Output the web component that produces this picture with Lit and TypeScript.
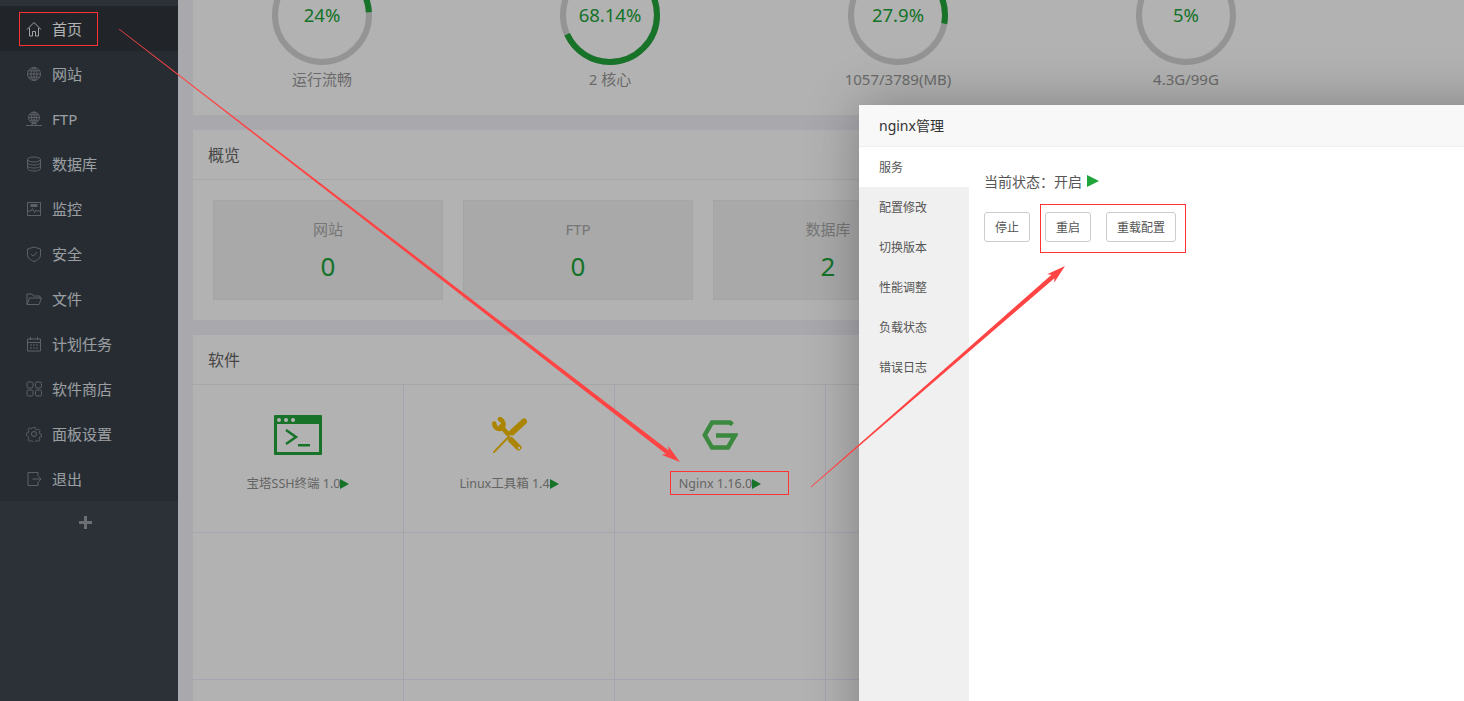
import { LitElement, html, css, svg } from "lit";
import { customElement } from "lit/decorators.js";

const ICONS: Record<string, unknown> = {
  home: svg`<path d="M1 8.500 8 1.500l7 7M3.500 7v8h3v-4.500h3V15h3V7"/>`,
  globe: svg`<circle cx="8" cy="8" r="6.500"/><ellipse cx="8" cy="8" rx="3" ry="6.500"/><path d="M1.500 8h13M2.500 4.800h11M2.500 11.200h11M8 1.500v13"/>`,
  ftp: svg`<circle cx="8" cy="6.500" r="5.500"/><ellipse cx="8" cy="6.500" rx="2.500" ry="5.500"/><path d="M2.500 6.500h11M3.200 3.800h9.600M3.200 9.200h9.600M8 1v11M0 14.500h16M6 12.500h4v2H6z"/>`,
  db: svg`<ellipse cx="8" cy="3.500" rx="6.500" ry="2.500"/><path d="M1.500 3.500v9c0 1.400 2.900 2.500 6.500 2.500s6.500-1.100 6.500-2.500v-9M1.500 6.500C1.500 7.900 4.400 9 8 9s6.500-1.100 6.500-2.500M1.500 9.500c0 1.400 2.900 2.500 6.500 2.500s6.500-1.100 6.500-2.500"/>`,
  monitor: svg`<path d="M1.500 1.500h13v13h-13z"/><path d="M1.500 10H5l1.500-2.500L8.500 11.500 10 9l1 1h3.500"/><path class="fill" d="M4.500 3h7v3h-7z"/>`,
  shield: svg`<path d="M8 1 14.500 3v6c0 3-3 5.200-6.500 6.500C4.500 14.200 1.500 12 1.500 9V3z"/><path d="m5 8 2.200 2.200L11.200 6"/>`,
  folder: svg`<path d="M1 13.500V3h5l1.500 2H14v2M1 13.500h12L15.500 7H3.500z"/>`,
  calendar: svg`<path d="M1.500 3h13v12h-13zM1.500 6.500h13M4.500 1v3M11.500 1v3M4 9h2M7 9h2M10 9h2M4 12h2M7 12h2M10 12h2"/>`,
  grid: svg`<rect x="1" y="1" width="6" height="6" rx="1.500"/><rect x="9.500" y="1" width="6" height="6" rx="1.500"/><rect x="1" y="9" width="6" height="6" rx="1.500"/><rect x="9.500" y="9" width="6" height="6" rx="1.500"/>`,
  gear: svg`<circle cx="8" cy="8" r="2.500"/><path d="M6.800 1h2.400l.4 2 1.500.7 1.800-1 1.600 1.700-1 1.700.6 1.600 1.900.6v2.400l-1.900.5-.6 1.600 1 1.700-1.600 1.500-1.800-1-1.500.7-.4 1.900H6.800l-.4-1.900-1.500-.7-1.800 1-1.600-1.500 1-1.700-.6-1.600L0 9.300V6.900l1.900-.6.6-1.600-1-1.700 1.600-1.700 1.800 1 1.500-.7z" transform="translate(.6 .6) scale(.93)"/>`,
  exit: svg`<path d="M12 5V1.500H2v13h10V11M6.500 8H15M12.500 5.500 15 8l-2.500 2.500"/>`,
};

function arrow(x1: number, y1: number, x2: number, y2: number): string {
  const len = Math.hypot(x2 - x1, y2 - y1);
  const ux = (x2 - x1) / len;
  const uy = (y2 - y1) / len;
  const nx = -uy;
  const ny = ux;
  const at = (along: number, side: number) =>
    `${(x2 - ux * along + nx * side).toFixed(1)},${(y2 - uy * along + ny * side).toFixed(1)}`;
  return [
    at(len, 0.4),
    at(16, 2.2),
    at(19, 5.5),
    at(0, 0),
    at(19, -5.5),
    at(16, -2.2),
    at(len, -0.4),
  ].join(" ");
}

const NAV = [
  ["home", "首页"],
  ["globe", "网站"],
  ["ftp", "FTP"],
  ["db", "数据库"],
  ["monitor", "监控"],
  ["shield", "安全"],
  ["folder", "文件"],
  ["calendar", "计划任务"],
  ["grid", "软件商店"],
  ["gear", "面板设置"],
  ["exit", "退出"],
];

const GAUGES = [
  [24, "24%", "运行流畅"],
  [68.14, "68.14%", "2 核心"],
  [27.9, "27.9%", "1057/3789(MB)"],
  [5, "5%", "4.3G/99G"],
] as const;

const OVERVIEW = [
  ["网站", "0"],
  ["FTP", "0"],
  ["数据库", "2"],
];

const TABS = ["服务", "配置修改", "切换版本", "性能调整", "负载状态", "错误日志"];

const SOFT_ICONS = {
  terminal: svg`<svg class="soft-icon" viewBox="0 0 48 40" width="48" height="40">
    <path fill="#20a53a" fill-rule="evenodd" d="M1 0h46a1 1 0 0 1 1 1v38a1 1 0 0 1-1 1H1a1 1 0 0 1-1-1V1a1 1 0 0 1 1-1zm2 9v28h42V9z"/>
    <circle cx="5" cy="5" r="2" fill="#fff"/><circle cx="12" cy="5" r="2" fill="#fff"/><circle cx="19" cy="5" r="2" fill="#fff"/>
    <path fill="none" stroke="#20a53a" stroke-width="2.500" d="m12 15 10 7-10 7"/>
    <path fill="#20a53a" d="M24 29h12v2.500H24z"/>
  </svg>`,
  tools: svg`<svg class="soft-icon" viewBox="0 0 36 36" width="36" height="36">
    <g fill="none" stroke="#f6bf00" stroke-linecap="round">
      <path stroke-width="1.800" d="M3 35 18 19.500"/>
      <path stroke-width="6" d="M21 15.500 33 4.500"/>
      <path stroke-width="4.500" d="M10 9.500 17 17"/>
      <path stroke-width="6" d="M20 23 27.500 30.500"/>
      <path stroke-width="4.500" d="M3.200 6.500C3.500 11 7.500 13 11 11.500 13.500 9 13 4.500 9 2"/>
    </g>
    <circle cx="28" cy="31" r="1.200" fill="#fff"/>
  </svg>`,
  nginx: svg`<svg class="soft-icon nginx" viewBox="0 0 36 30" width="36" height="30">
    <path fill="none" stroke="#54c45a" stroke-width="4.500" d="M30.500 4.500 28 2.500H10L2.800 15 10 27.500h16L33 15.500H14"/>
  </svg>`,
};

const SOFT = [
  ["terminal", "宝塔SSH终端 1.0"],
  ["tools", "Linux工具箱 1.4"],
  ["nginx", "Nginx 1.16.0"],
] as const;

@customElement("app-root")
export class AppRoot extends LitElement {
  static styles = css`
    :host {
      display: block;
      position: relative;
      height: 701px;
      overflow: hidden;
      font-family: "Noto Sans", "Noto Sans CJK SC", sans-serif;
      background: #f1f1f8;
    }
    .page { display: flex; height: 701px; }

    .side {
      flex: 0 0 178px;
      display: flex;
      flex-direction: column;
      background: #39404a;
    }
    .side-top { height: 6px; background: #404751; flex: none; }
    .nav-item {
      flex: none;
      height: 45px;
      box-sizing: border-box;
      padding: 1px 0 0 26px;
      display: flex;
      align-items: center;
      gap: 10px;
      font-size: 15px;
      line-height: 20px;
      color: #dfe2e6;
    }
    .nav-item span { margin-top: -1px; }
    .nav-item svg {
      flex: none;
      width: 16px;
      height: 16px;
      fill: none;
      stroke: #868b92;
      stroke-width: 1;
    }
    .nav-item svg .fill { fill: #868b92; stroke: none; }
    .nav-item.on { background: #30353c; color: #fff; }
    .nav-item.on svg { stroke: #e8e8e8; }
    .plus {
      flex: 1;
      background: #3f4650;
      display: flex;
      justify-content: center;
      padding: 15px 8px 0 0;
    }
    .plus span { width: 13px; height: 13px; }
    .plus i { display: block; background: #9c9ea2; }
    .plus i.h { width: 13px; height: 3px; margin-top: 5px; }
    .plus i.v { width: 3px; height: 13px; margin: -8px 0 0 5px; }

    .main {
      flex: 1;
      min-width: 0;
      padding-left: 15px;
      display: flex;
      flex-direction: column;
      gap: 15px;
      margin-top: -35px;
    }
    .card { background: #fff; flex: none; }
    .card-head {
      height: 50px;
      box-sizing: border-box;
      border-bottom: 1px solid #eee;
      padding: 0 0 2px 15px;
      display: flex;
      align-items: center;
      font-size: 16px;
      color: #666;
    }

    .gauges {
      display: grid;
      grid-template-columns: repeat(4, 258px);
      column-gap: 30px;
      height: 150px;
    }
    .gauge { display: flex; flex-direction: column; align-items: center; }
    .ring { position: relative; width: 100px; height: 100px; }
    .ring svg { display: block; transform: rotate(-90deg); }
    .ring b {
      position: absolute;
      inset: 0 0 2px;
      display: flex;
      align-items: center;
      justify-content: center;
      font-weight: 400;
      font-size: 18.5px;
      color: #20a53a;
    }
    .gauge p { margin: 4px 0 0; font-size: 15px; line-height: 20px; color: #999; }

    .boxes { display: flex; gap: 20px; padding: 20px; }
    .box {
      flex: none;
      width: 230px;
      height: 100px;
      box-sizing: border-box;
      background: #f3f3f3;
      border: 1px solid #ececec;
      display: flex;
      flex-direction: column;
      align-items: center;
      padding-top: 18px;
    }
    .box span { font-size: 15px; line-height: 20px; color: #aaa; }
    .box strong { font-weight: 400; font-size: 26px; line-height: 36px; margin-top: 9px; color: #20a53a; }

    .soft {
      display: grid;
      grid-template-columns: repeat(6, 211px);
      grid-template-rows: 148px 147px 147px;
    }
    .cell {
      box-sizing: border-box;
      border-right: 1px solid #ecebfb;
      border-bottom: 1px solid #ecebfb;
      display: flex;
      flex-direction: column;
      align-items: center;
      padding-top: 30px;
    }
    .cell .slot { height: 40px; display: flex; align-items: center; justify-content: center; }
    .cell .nginx { margin-left: -1px; }
    .cell p {
      margin: 21px 0 0;
      font-size: 12.5px;
      line-height: 16px;
      color: #909090;
      display: flex;
      align-items: center;
    }
    .tri {
      display: inline-block;
      width: 0;
      height: 0;
      border-left: 9px solid #20a53a;
      border-top: 5.500px solid transparent;
      border-bottom: 5.500px solid transparent;
    }

    .shade { position: absolute; inset: 0; background: rgba(0, 0, 0, 0.3); }

    .dialog {
      position: absolute;
      left: 859px;
      top: 105px;
      width: 700px;
      height: 700px;
      background: #fff;
      box-shadow: 1px 1px 50px rgba(0, 0, 0, 0.3);
      display: flex;
      flex-direction: column;
    }
    .dlg-title {
      flex: none;
      height: 42px;
      box-sizing: border-box;
      background: #f8f8f8;
      border-bottom: 1px solid #eee;
      padding: 0 0 2px 20px;
      display: flex;
      align-items: center;
      font-size: 14px;
      color: #333;
    }
    .dlg-body { flex: 1; display: flex; }
    .tabs { flex: 0 0 110px; background: #f0f0f0; }
    .tab {
      height: 40px;
      box-sizing: border-box;
      padding-left: 20px;
      display: flex;
      align-items: center;
      font-size: 12px;
      color: #555;
    }
    .tab.on { background: #fff; }
    .pane { flex: 1; padding: 24px 15px; }
    .status {
      display: flex;
      align-items: center;
      gap: 5px;
      height: 20px;
      font-size: 14px;
      color: #555;
    }
    .status .play {
      border-left: 12px solid #20a53a;
      border-top: 6.500px solid transparent;
      border-bottom: 6.500px solid transparent;
    }
    .btns { display: flex; gap: 15px; margin-top: 21px; }
    .btn {
      height: 30px;
      box-sizing: border-box;
      padding: 0 10px;
      border: 1px solid #ccc;
      border-radius: 3px;
      background: #fff;
      font: inherit;
      font-size: 12px;
      color: #555;
    }

    .marks { position: absolute; inset: 0; width: 1464px; height: 701px; pointer-events: none; }
    .marks rect { fill: none; stroke: #f33; stroke-width: 1; }
    .marks polygon { fill: #f44; }
  `;

  render() {
    const C = 2 * Math.PI * 47;
    return html`
      <div class="page">
        <aside class="side">
          <div class="side-top"></div>
          ${NAV.map(
            ([icon, label], i) => html`
              <div class="nav-item ${i === 0 ? "on" : ""}">
                <svg viewBox="0 0 16 16">${ICONS[icon]}</svg>
                <span>${label}</span>
              </div>
            `
          )}
          <div class="plus"><span><i class="h"></i><i class="v"></i></span></div>
        </aside>
        <main class="main">
          <section class="card gauges">
            ${GAUGES.map(
              ([pct, value, label]) => html`
                <div class="gauge">
                  <div class="ring">
                    <svg width="100" height="100" viewBox="0 0 100 100" fill="none" stroke-width="6">
                      <circle cx="50" cy="50" r="47" stroke="#d4d4d4"></circle>
                      <circle
                        cx="50"
                        cy="50"
                        r="47"
                        stroke="#20a53a"
                        stroke-dasharray="${(C * pct) / 100} ${C}"
                      ></circle>
                    </svg>
                    <b>${value}</b>
                  </div>
                  <p>${label}</p>
                </div>
              `
            )}
          </section>
          <section class="card">
            <div class="card-head">概览</div>
            <div class="boxes">
              ${OVERVIEW.map(
                ([label, value]) => html`
                  <div class="box"><span>${label}</span><strong>${value}</strong></div>
                `
              )}
            </div>
          </section>
          <section class="card">
            <div class="card-head">软件</div>
            <div class="soft">
              ${SOFT.map(
                ([icon, label]) => html`
                  <div class="cell">
                    <div class="slot">${SOFT_ICONS[icon]}</div>
                    <p>${label}<i class="tri"></i></p>
                  </div>
                `
              )}
              ${Array.from({ length: 15 }, () => html`<div class="cell"></div>`)}
            </div>
          </section>
        </main>
      </div>
      <div class="shade"></div>
      <div class="dialog">
        <div class="dlg-title">nginx管理</div>
        <div class="dlg-body">
          <div class="tabs">
            ${TABS.map((t, i) => html`<div class="tab ${i === 0 ? "on" : ""}">${t}</div>`)}
          </div>
          <div class="pane">
            <div class="status">当前状态：开启 <i class="tri play"></i></div>
            <div class="btns">
              <button class="btn">停止</button>
              <button class="btn">重启</button>
              <button class="btn">重载配置</button>
            </div>
          </div>
        </div>
      </div>
      <svg class="marks" viewBox="0 0 1464 701">
        <rect x="19.500" y="12.500" width="78" height="33"></rect>
        <rect x="670.500" y="471.500" width="118" height="23"></rect>
        <rect x="1040.500" y="204.500" width="145" height="48"></rect>
        <polygon points="${arrow(119, 29, 680, 462)}"></polygon>
        <polygon points="${arrow(811, 487, 1065, 266)}"></polygon>
      </svg>
    `;
  }
}
